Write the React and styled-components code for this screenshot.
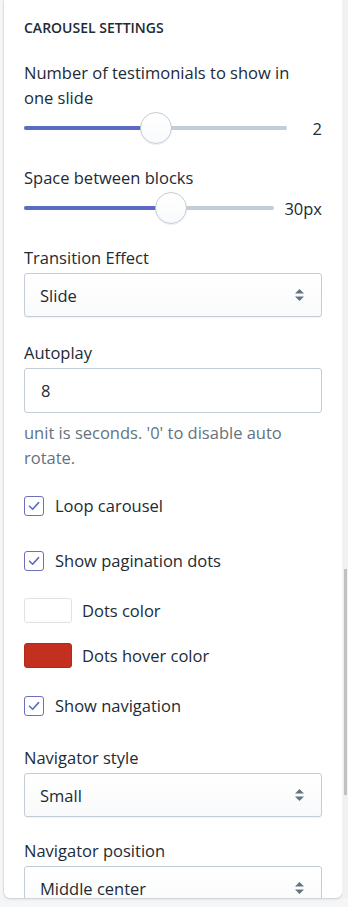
import React from "react";
import styled, { createGlobalStyle } from "styled-components";

const GlobalStyle = createGlobalStyle`
  html, body {
    margin: 0;
    padding: 0;
    background: #f4f6f8;
  }
  body {
    font-family: "Open Sans", "Noto Sans", sans-serif;
    color: #212b36;
  }
`;

const Page = styled.div`
  width: 348px;
  height: 907px;
  overflow: hidden;
  background: #f4f6f8;
`;

const Frame = styled.div`
  display: flex;
  height: 898px;
  padding-left: 4px;
`;

const Panel = styled.div`
  flex: 1;
  background: #fff;
  border-radius: 0 0 6px 6px;
  box-shadow: 0 0 0 1px rgba(63, 63, 68, 0.06), 0 1px 3px rgba(63, 63, 68, 0.18);
  overflow: hidden;
  padding: 18px 20px 0;
  display: flex;
  flex-direction: column;
`;

const ScrollTrack = styled.div`
  width: 6px;
  background: #f1f1f1;
  display: flex;
  flex-direction: column;
  padding-left: 2px;
  box-sizing: border-box;
`;

const ScrollThumb = styled.div`
  margin-top: ${(p) => p.$top}px;
  height: ${(p) => p.$height}px;
  width: 3px;
  background: #c1c1c1;
`;

const Heading = styled.h2`
  margin: 0;
  font-size: 14px;
  line-height: 20px;
  font-weight: 600;
  text-transform: uppercase;
  color: #212b36;
`;

const Block = styled.div`
  margin-top: ${(p) => p.$mt || 0}px;
  display: flex;
  flex-direction: column;
`;

const Label = styled.div`
  font-size: 16.5px;
  line-height: 25px;
  margin-bottom: 3px;
`;

const HelpText = styled.div`
  margin-top: 7px;
  font-size: 16.5px;
  line-height: 25px;
  color: #637381;
`;

const RangeRow = styled.div`
  display: flex;
  align-items: center;
  height: 30px;
  gap: 10px;
`;

const Track = styled.div`
  position: relative;
  flex: 1;
  height: 4px;
  border-radius: 2px;
  background: #c4cdd5;
`;

const Fill = styled.div`
  height: 100%;
  border-radius: 2px;
  background: #5c6ac4;
`;

const Thumb = styled.div`
  position: absolute;
  top: 50%;
  width: 32px;
  height: 32px;
  margin-top: -16px;
  margin-left: -16px;
  border-radius: 50%;
  box-sizing: border-box;
  background: linear-gradient(#fff, #f9fafb);
  border: 1px solid #c4cdd5;
  box-shadow: 0 1px 1px rgba(22, 29, 37, 0.08);
`;

const RangeValue = styled.div`
  min-width: 25px;
  text-align: right;
  font-size: 16.5px;
  line-height: 25px;
`;

const SelectBox = styled.div`
  display: flex;
  align-items: center;
  justify-content: space-between;
  height: 44px;
  box-sizing: border-box;
  padding: 0 16px 0 15px;
  border: 1px solid #c4cdd5;
  border-radius: 3px;
  background: linear-gradient(#ffffff, #f9fafb);
  box-shadow: 0 1px 0 rgba(22, 29, 37, 0.05);
  font-size: 16.5px;
  flex-shrink: 0;
`;

const TextInput = styled.div`
  display: flex;
  align-items: center;
  height: 45px;
  box-sizing: border-box;
  padding: 0 16px;
  border: 1px solid #c4cdd5;
  border-radius: 3px;
  background: #fff;
  font-size: 16.5px;
`;

const CheckRow = styled.label`
  display: flex;
  align-items: center;
  gap: 11px;
  height: 25px;
  font-size: 16.5px;
`;

const CheckBox = styled.span`
  width: 20px;
  height: 20px;
  box-sizing: border-box;
  border: 1.5px solid #6b71b8;
  border-radius: 3px;
  background: #fff;
  display: flex;
  align-items: center;
  justify-content: center;
`;

const SwatchRow = styled.div`
  display: flex;
  align-items: center;
  gap: 10px;
  height: 25px;
  font-size: 16.5px;
`;

const Swatch = styled.span`
  width: 48px;
  height: 25px;
  box-sizing: border-box;
  border-radius: 3px;
  background: ${(p) => p.$color};
  border: 1px solid ${(p) => (p.$color === "#ffffff" ? "#dfe3e8" : "#b02a1b")};
`;

const Arrows = () => (
  <svg width="11" height="14" viewBox="0 0 11 14">
    <path d="M5.5 1 L10 5.5 H1 Z" fill="#637381" />
    <path d="M5.5 13 L10 8.5 H1 Z" fill="#637381" />
  </svg>
);

const Check = () => (
  <svg width="12" height="10" viewBox="0 0 12 10">
    <path
      d="M1.5 5.2 L4.6 8.2 L10.6 1.6"
      fill="none"
      stroke="#5c6ac4"
      strokeWidth="1.6"
      strokeLinecap="round"
      strokeLinejoin="round"
    />
  </svg>
);

const RangeField = ({ label, ratio, value, mt }) => (
  <Block $mt={mt}>
    <Label>{label}</Label>
    <RangeRow>
      <Track>
        <Fill style={{ width: `calc(16px + (100% - 32px) * ${ratio})` }} />
        <Thumb style={{ left: `calc(16px + (100% - 32px) * ${ratio})` }} />
      </Track>
      <RangeValue>{value}</RangeValue>
    </RangeRow>
  </Block>
);

const SelectField = ({ label, value, mt }) => (
  <Block $mt={mt}>
    <Label>{label}</Label>
    <SelectBox>
      <span>{value}</span>
      <Arrows />
    </SelectBox>
  </Block>
);

const CheckField = ({ label, mt }) => (
  <Block $mt={mt}>
    <CheckRow>
      <CheckBox>
        <Check />
      </CheckBox>
      {label}
    </CheckRow>
  </Block>
);

const ColorField = ({ label, color, mt }) => (
  <Block $mt={mt}>
    <SwatchRow>
      <Swatch $color={color} />
      {label}
    </SwatchRow>
  </Block>
);

export default function App() {
  return (
    <Page>
      <GlobalStyle />
      <Frame>
        <Panel>
          <Heading>Carousel settings</Heading>
          <RangeField
            mt={22}
            label="Number of testimonials to show in one slide"
            ratio={0.5}
            value="2"
          />
          <RangeField mt={22} label="Space between blocks" ratio={0.6} value="30px" />
          <SelectField mt={22} label="Transition Effect" value="Slide" />
          <Block $mt={23}>
            <Label>Autoplay</Label>
            <TextInput>8</TextInput>
            <HelpText>unit is seconds. '0' to disable auto rotate.</HelpText>
          </Block>
          <CheckField mt={23} label="Loop carousel" />
          <CheckField mt={30} label="Show pagination dots" />
          <ColorField mt={25} label="Dots color" color="#ffffff" />
          <ColorField mt={20} label="Dots hover color" color="#c4301f" />
          <CheckField mt={25} label="Show navigation" />
          <SelectField mt={27} label="Navigator style" value="Small" />
          <SelectField mt={21} label="Navigator position" value="Middle center" />
        </Panel>
        <ScrollTrack>
          <ScrollThumb $top={569} $height={226} />
        </ScrollTrack>
      </Frame>
    </Page>
  );
}
